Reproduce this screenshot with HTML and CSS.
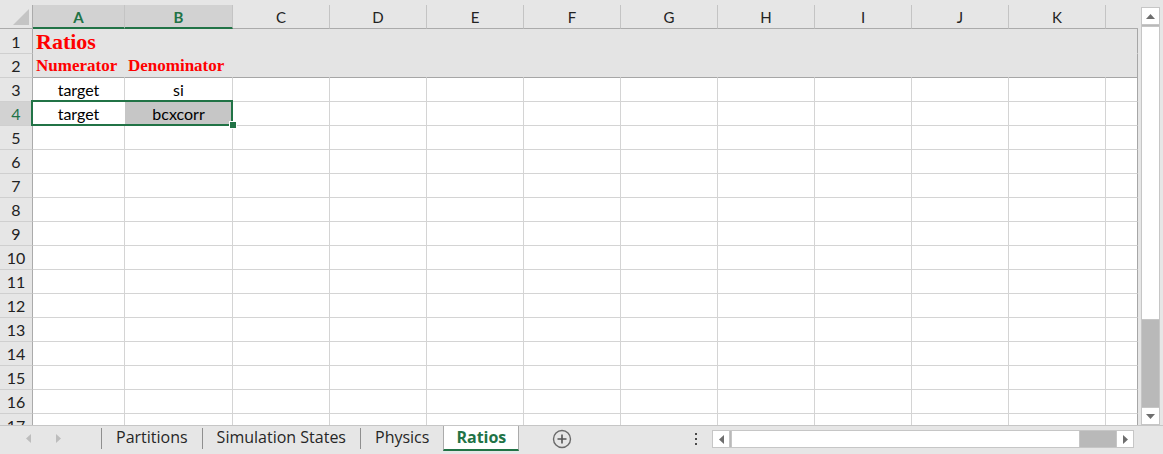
FILE: index.html
```html
<!DOCTYPE html>
<html>
<head>
<meta charset="utf-8">
<link rel="stylesheet" href="styles.css">
</head>
<body>
<div class="app">
  <div class="topstrip"></div>
  <div class="main">
    <div class="sheet">
      <div class="grid">
        <div class="corner"><span class="tri"></span></div>
        <div class="ch sel">A</div><div class="ch sel">B</div><div class="ch">C</div><div class="ch">D</div><div class="ch">E</div><div class="ch">F</div><div class="ch">G</div><div class="ch">H</div><div class="ch">I</div><div class="ch">J</div><div class="ch">K</div><div class="ch last"></div>

        <div class="rh r1">1</div>
        <div class="c fill f1 left"><span class="title">Ratios</span></div><div class="c fill f1"></div><div class="c fill f1"></div><div class="c fill f1"></div><div class="c fill f1"></div><div class="c fill f1"></div><div class="c fill f1"></div><div class="c fill f1"></div><div class="c fill f1"></div><div class="c fill f1"></div><div class="c fill f1"></div><div class="c fill f1 l"></div>

        <div class="rh">2</div>
        <div class="c fill f2 left"><span class="sub">Numerator</span></div><div class="c fill f2 left"><span class="sub">Denominator</span></div><div class="c fill f2"></div><div class="c fill f2"></div><div class="c fill f2"></div><div class="c fill f2"></div><div class="c fill f2"></div><div class="c fill f2"></div><div class="c fill f2"></div><div class="c fill f2"></div><div class="c fill f2"></div><div class="c fill f2 l"></div>

        <div class="rh">3</div>
        <div class="c">target</div><div class="c">si</div><div class="c"></div><div class="c"></div><div class="c"></div><div class="c"></div><div class="c"></div><div class="c"></div><div class="c"></div><div class="c"></div><div class="c"></div><div class="c l"></div>

        <div class="rh rsel">4</div>
        <div class="c active">target</div><div class="c range">bcxcorr</div><div class="c"></div><div class="c"></div><div class="c"></div><div class="c"></div><div class="c"></div><div class="c"></div><div class="c"></div><div class="c"></div><div class="c"></div><div class="c l"></div>

        <div class="rh">5</div><div class="c"></div><div class="c"></div><div class="c"></div><div class="c"></div><div class="c"></div><div class="c"></div><div class="c"></div><div class="c"></div><div class="c"></div><div class="c"></div><div class="c"></div><div class="c l"></div>
        <div class="rh">6</div><div class="c"></div><div class="c"></div><div class="c"></div><div class="c"></div><div class="c"></div><div class="c"></div><div class="c"></div><div class="c"></div><div class="c"></div><div class="c"></div><div class="c"></div><div class="c l"></div>
        <div class="rh">7</div><div class="c"></div><div class="c"></div><div class="c"></div><div class="c"></div><div class="c"></div><div class="c"></div><div class="c"></div><div class="c"></div><div class="c"></div><div class="c"></div><div class="c"></div><div class="c l"></div>
        <div class="rh">8</div><div class="c"></div><div class="c"></div><div class="c"></div><div class="c"></div><div class="c"></div><div class="c"></div><div class="c"></div><div class="c"></div><div class="c"></div><div class="c"></div><div class="c"></div><div class="c l"></div>
        <div class="rh">9</div><div class="c"></div><div class="c"></div><div class="c"></div><div class="c"></div><div class="c"></div><div class="c"></div><div class="c"></div><div class="c"></div><div class="c"></div><div class="c"></div><div class="c"></div><div class="c l"></div>
        <div class="rh">10</div><div class="c"></div><div class="c"></div><div class="c"></div><div class="c"></div><div class="c"></div><div class="c"></div><div class="c"></div><div class="c"></div><div class="c"></div><div class="c"></div><div class="c"></div><div class="c l"></div>
        <div class="rh">11</div><div class="c"></div><div class="c"></div><div class="c"></div><div class="c"></div><div class="c"></div><div class="c"></div><div class="c"></div><div class="c"></div><div class="c"></div><div class="c"></div><div class="c"></div><div class="c l"></div>
        <div class="rh">12</div><div class="c"></div><div class="c"></div><div class="c"></div><div class="c"></div><div class="c"></div><div class="c"></div><div class="c"></div><div class="c"></div><div class="c"></div><div class="c"></div><div class="c"></div><div class="c l"></div>
        <div class="rh">13</div><div class="c"></div><div class="c"></div><div class="c"></div><div class="c"></div><div class="c"></div><div class="c"></div><div class="c"></div><div class="c"></div><div class="c"></div><div class="c"></div><div class="c"></div><div class="c l"></div>
        <div class="rh">14</div><div class="c"></div><div class="c"></div><div class="c"></div><div class="c"></div><div class="c"></div><div class="c"></div><div class="c"></div><div class="c"></div><div class="c"></div><div class="c"></div><div class="c"></div><div class="c l"></div>
        <div class="rh">15</div><div class="c"></div><div class="c"></div><div class="c"></div><div class="c"></div><div class="c"></div><div class="c"></div><div class="c"></div><div class="c"></div><div class="c"></div><div class="c"></div><div class="c"></div><div class="c l"></div>
        <div class="rh">16</div><div class="c"></div><div class="c"></div><div class="c"></div><div class="c"></div><div class="c"></div><div class="c"></div><div class="c"></div><div class="c"></div><div class="c"></div><div class="c"></div><div class="c"></div><div class="c l"></div>
        <div class="rh">17</div><div class="c"></div><div class="c"></div><div class="c"></div><div class="c"></div><div class="c"></div><div class="c"></div><div class="c"></div><div class="c"></div><div class="c"></div><div class="c"></div><div class="c"></div><div class="c l"></div>

        <div class="selection"><span class="handle"></span></div>
      </div>
    </div>
    <div class="vscroll">
      <div class="sbtn"><svg width="9" height="5" viewBox="0 0 9 5"><polygon points="0,5 9,5 4.5,0" fill="#6e6e6e"/></svg></div>
      <div class="vtrack"><div class="vthumb"></div></div>
      <div class="sbtn"><svg width="9" height="5" viewBox="0 0 9 5"><polygon points="0,0 9,0 4.5,5" fill="#6e6e6e"/></svg></div>
    </div>
  </div>
  <div class="tabbar">
    <div class="nav">
      <svg width="5" height="9" viewBox="0 0 5 9"><polygon points="5,0 5,9 0,4.5" fill="#bdbdbd"/></svg>
      <svg width="5" height="9" viewBox="0 0 5 9"><polygon points="0,0 0,9 5,4.5" fill="#bdbdbd"/></svg>
    </div>
    <span class="sep"></span>
    <div class="tab">Partitions</div>
    <span class="sep"></span>
    <div class="tab">Simulation States</div>
    <span class="sep"></span>
    <div class="tab">Physics</div>
    <div class="tab current">Ratios</div>
    <div class="plus">
      <svg width="20" height="20" viewBox="0 0 20 20"><circle cx="10" cy="10" r="8.5" fill="none" stroke="#6a6a6a" stroke-width="1.4"/><path d="M10 5.5v9M5.5 10h9" stroke="#555" stroke-width="1.6"/></svg>
    </div>
    <div class="dots"><i></i><i></i><i></i></div>
    <div class="hscroll">
      <div class="sbtn"><svg width="5" height="9" viewBox="0 0 5 9"><polygon points="5,0 5,9 0,4.5" fill="#6e6e6e"/></svg></div>
      <div class="htrack"><div class="hthumb"></div></div>
      <div class="sbtn"><svg width="5" height="9" viewBox="0 0 5 9"><polygon points="0,0 0,9 5,4.5" fill="#6e6e6e"/></svg></div>
    </div>
  </div>
</div>
</body>
</html>
```

FILE: styles.css
```css
* { box-sizing: border-box; }
body {
  margin: 0;
  background: #e6e6e6;
  font-family: Lato, "Liberation Sans", sans-serif;
  color: #000;
}
.app {
  width: 1163px;
  height: 454px;
  display: flex;
  flex-direction: column;
  overflow: hidden;
}
.topstrip { height: 5px; flex: none; }
.main { display: flex; height: 420px; flex: none; }
.sheet {
  width: 1138px;
  height: 420px;
  overflow: hidden;
  background: #fff;
  flex: none;
}
.grid {
  position: relative;
  display: grid;
  grid-template-columns: 33px 92px 108px repeat(9, 97px) 32px;
  grid-template-rows: 24px 25px repeat(16, 24px);
}
.corner {
  background: #e6e6e6;
  border-right: 1px solid #ababab;
  border-bottom: 1px solid #ababab;
  display: flex;
  justify-content: flex-end;
  align-items: flex-end;
  padding: 0 3px 3px 0;
}
.tri {
  width: 0;
  height: 0;
  border-left: 16px solid transparent;
  border-bottom: 16px solid #c4c4c4;
}
.ch {
  background: #e6e6e6;
  border-right: 1px solid #c4c4c4;
  border-bottom: 1px solid #ababab;
  font-size: 15px;
  line-height: 18px;
  color: #222;
  display: flex;
  justify-content: center;
  align-items: flex-end;
  padding-bottom: 2px;
}
.ch.sel {
  background: #d2d2d2;
  color: #217346;
  font-weight: bold;
  border-bottom: 2px solid #217346;
  padding-bottom: 1px;
}
.ch.last { border-right: none; }
.rh {
  background: #e6e6e6;
  border-right: 1px solid #ababab;
  border-bottom: 1px solid #cfcfcf;
  font-size: 16px;
  line-height: 18px;
  color: #222;
  display: flex;
  justify-content: center;
  align-items: flex-end;
  padding-bottom: 2px;
}
.rh.rsel { background: #d2d2d2; color: #217346; }
.c {
  border-right: 1px solid #d4d4d4;
  border-bottom: 1px solid #d4d4d4;
  font-size: 16px;
  line-height: 18px;
  display: flex;
  justify-content: center;
  align-items: flex-end;
  padding-bottom: 2px;
  white-space: nowrap;
}
.c.l { border-right-color: #a6a6a6; }
.c.left { justify-content: flex-start; padding-left: 3px; }
.fill { background: #e4e4e4; border-right-color: #e4e4e4; }
.fill.f1 { border-bottom-color: #e4e4e4; padding-bottom: 0; }
.fill.f2 { border-bottom-color: #a6a6a6; padding-bottom: 3px; }
.fill.l { border-right-color: #a6a6a6; }
.title {
  font-family: "Liberation Serif", serif;
  font-size: 22px;
  font-weight: bold;
  line-height: 1;
  color: #ff0000;
}
.sub {
  font-family: "Liberation Serif", serif;
  font-size: 17px;
  font-weight: bold;
  line-height: 1;
  color: #ff0000;
}
.c.active { border-right-color: #fff; }
.c.range { background: #c6c6c6; box-shadow: inset 0 -1px 0 #fff, inset -1px 0 0 #fff; }
.selection {
  position: absolute;
  grid-row: 5 / 6;
  grid-column: 2 / 4;
  top: -2px;
  left: -2px;
  right: 0;
  bottom: 0;
  border: 2px solid #217346;
}
.handle {
  position: absolute;
  right: -6px;
  bottom: -5px;
  width: 8px;
  height: 8px;
  background: #217346;
  border: 1px solid #fff;
}
.vscroll {
  width: 19px;
  margin-left: 3px;
  padding-top: 2px;
  display: flex;
  flex-direction: column;
}
.sbtn {
  width: 19px;
  height: 18px;
  flex: none;
  background: #fff;
  border: 1px solid #c6c6c6;
  display: flex;
  align-items: center;
  justify-content: center;
}
.sbtn svg { display: block; }
.vtrack {
  flex: 1;
  background: #b9b9b9;
  border-left: 1px solid #c6c6c6;
  border-right: 1px solid #c6c6c6;
  padding-top: 1px;
}
.vthumb {
  height: 294px;
  margin: 0 -1px;
  background: #fff;
  border: 1px solid #c6c6c6;
}
.tabbar {
  height: 29px;
  flex: none;
  border-top: 1px solid #c6c6c6;
  display: flex;
  align-items: flex-start;
  font-family: "Open Sans", "Noto Sans", sans-serif;
}
.nav {
  width: 101px;
  height: 25px;
  display: flex;
  align-items: center;
  padding-left: 26px;
  gap: 25px;
}
.nav svg { display: block; }
.sep {
  width: 1px;
  height: 21px;
  margin-top: 2px;
  background: #8f8f8f;
  flex: none;
}
.tab {
  height: 25px;
  padding: 0 14px 3px;
  font-size: 16px;
  color: #262626;
  display: flex;
  align-items: center;
  white-space: nowrap;
}
.tab.current {
  background: #fff;
  color: #217346;
  font-weight: bold;
  border-left: 1px solid #ababab;
  border-right: 1px solid #ababab;
  border-bottom: 2px solid #217346;
  padding: 0 12px 1px;
}
.plus {
  margin-left: 33px;
  height: 25px;
  display: flex;
  align-items: center;
}
.plus svg { display: block; }
.dots {
  margin-left: auto;
  margin-right: 15px;
  height: 25px;
  display: flex;
  flex-direction: column;
  justify-content: center;
  gap: 3px;
  padding-top: 1px;
}
.dots i {
  display: block;
  width: 2px;
  height: 2px;
  background: #4a4a4a;
}
.hscroll {
  width: 422px;
  height: 18px;
  margin-top: 4px;
  margin-right: 29px;
  display: flex;
}
.hscroll .sbtn { width: 18px; height: 18px; }
.htrack {
  flex: 1;
  background: #b9b9b9;
  border-top: 1px solid #c6c6c6;
  border-bottom: 1px solid #c6c6c6;
  padding-left: 1px;
  display: flex;
}
.hthumb {
  width: 349px;
  margin: -1px 0;
  background: #fff;
  border: 1px solid #c6c6c6;
}
```
